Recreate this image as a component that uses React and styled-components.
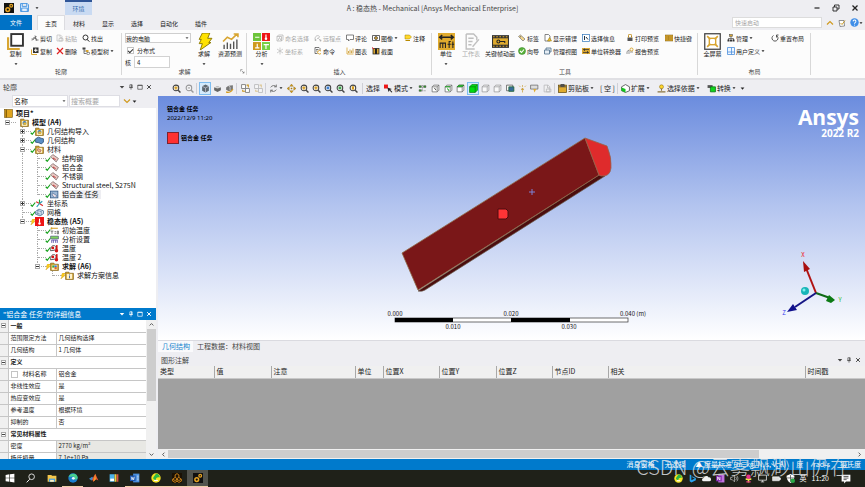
import React, { useState } from "react";
import styled, { createGlobalStyle } from "styled-components";

const GlobalStyle = createGlobalStyle`
    * {
        box-sizing: border-box;
    }

    body {
        margin: 0;
        background: #eeeef2;
        color: #222;
        font-family: "Noto Sans CJK SC", "Noto Sans", sans-serif;
        font-size: 7px;
        line-height: 9px;
    }

    button, input, select {
        font: inherit;
        color: inherit;
        margin: 0;
        padding: 0;
        border: none;
        background: none;
    }

    button, select {
        cursor: pointer;
    }
`;

const Page = styled.div`
    position: relative;
    min-height: 100vh;
    display: flex;
    flex-direction: column;
    overflow: hidden;
    white-space: nowrap;
`;

const Svg = styled.svg`
    width: ${(p) => p.$size}px;
    height: ${(p) => p.$size}px;
    flex: none;
    display: block;
    opacity: ${(p) => (p.$faded ? 0.45 : 1)};
`;

/* ---------- icons ---------- */

const lens = (
    <>
        <circle cx="7" cy="7" r="5" fill="#fff" stroke="#444" strokeWidth="1.8" />
        <path d="M11 11l4 4" stroke="#444" strokeWidth="2.4" />
    </>
);

const cubeLines = (
    <path d="M2 5h9v9H2zM2 5l3-3h9v9l-3 3M11 5l3-3" fill="#fff" stroke="#666" strokeWidth="1.3" />
);

const folderBox = (
    <>
        <path d="M1 2h6l1 2h7v11H1z" fill="#c8951b" stroke="#6f4d00" />
        <rect x="3" y="5" width="10" height="9" fill="#fff3c9" />
    </>
);

const gears = (
    <>
        <rect width="16" height="16" fill="#101010" />
        <circle cx="6" cy="10.5" r="3" fill="none" stroke="#e5a323" strokeWidth="2.4" />
        <circle cx="11.5" cy="4.5" r="2.2" fill="none" stroke="#e5a323" strokeWidth="2" />
    </>
);

const drawings = {
    gears,
    save: (
        <path d="M1 1h12l2 2v12H1zM4 1v5h8V1M3 15V9h10v6" fill="#e3f0ff" stroke="#3d8ee0" strokeWidth="1.6" />
    ),
    bigCopy: (
        <>
            <path d="M1 4v11h11" fill="none" stroke="#d8a531" strokeWidth="2" />
            <rect x="4" y="1" width="11" height="11" fill="#fff" stroke="#333" strokeWidth="1.8" />
        </>
    ),
    cut: <path d="M2 13l9-9M8 3l3 10M1 10h5M9 12h6M5 7l6 3" fill="none" stroke="#555" strokeWidth="1.6" />,
    paste: <path d="M2 2h7l3 3v9H2zM8 2v5h4M6 9h8v5H6z" fill="#f4f4f4" stroke="#777" strokeWidth="1.4" />,
    find: (
        <>
            <circle cx="7" cy="7" r="5" fill="none" stroke="#333" strokeWidth="2" />
            <path d="M10 11l5 4" stroke="#333" strokeWidth="2" />
        </>
    ),
    copy: (
        <>
            <path d="M1 5v10h11" fill="none" stroke="#d8a531" strokeWidth="2" />
            <rect x="4" y="1" width="11" height="11" fill="#333" />
            <path d="M9.500 3v7M6 6.500h7" stroke="#fff" strokeWidth="2" />
        </>
    ),
    remove: <path d="M2 2l12 12M14 2L2 14" stroke="#e01f1f" strokeWidth="2.4" />,
    tree: (
        <>
            <path d="M4 4v9h5M4 8h5" fill="none" stroke="#444" strokeWidth="1.4" />
            <rect x="1" y="1" width="6" height="4" fill="#444" />
            <rect x="8" y="6" width="5" height="4" fill="#d8a531" />
            <rect x="10" y="11" width="5" height="4" fill="#fff" stroke="#444" />
        </>
    ),
    bolt: <path d="M6 0h7l-2 5h4l-3 4h2L4 16l2-6H3l2-4H3z" fill="#ffe200" stroke="#8b7900" strokeWidth="0.9" />,
    forecast: (
        <>
            <path d="M2 15v-4M5 15V9M8 15v-5M11 15V8M14 15V6" stroke="#555" strokeWidth="1.3" />
            <path d="M1 8l4-4 4 2 5-5M11 1h4v3" fill="none" stroke="#d8a531" strokeWidth="1.5" />
        </>
    ),
    analysis: (
        <>
            <rect width="7.500" height="7.500" fill="#6cc43a" />
            <rect x="8.500" width="7.500" height="7.500" fill="#ee1515" />
            <rect y="8.500" width="7.500" height="7.500" fill="#cf9a1e" />
            <rect x="8.500" y="8.500" width="7.500" height="7.500" fill="#76cf42" />
            <path d="M2 4h4M12.200 1.500v4M2 14h4M4 10v4M10 11h5M12.200 11v4" fill="none" stroke="#fff" strokeWidth="1.1" />
            <circle cx="12.200" cy="5.500" r="1.200" fill="#fff" />
        </>
    ),
    named: <path d="M2 5h9v9H2zM2 5l3-3h9v9l-3 3M4 13l3-6 3 6" fill="none" stroke="#555" strokeWidth="1.4" />,
    remote: (
        <>
            <path d="M2 10c0-6 5-8 8-6s-1 5-4 5M9 9l3 3" fill="none" stroke="#555" strokeWidth="1.5" />
            <circle cx="13" cy="13" r="1.800" fill="#555" />
            <circle cx="3" cy="12" r="1.800" fill="#555" />
        </>
    ),
    comment: <path d="M1 2h14v9H8l-3 3v-3H1z" fill="#fff" stroke="#555" strokeWidth="1.5" />,
    camera: (
        <>
            <path d="M1 3h14v10H1z" fill="#fff" stroke="#333" strokeWidth="1.5" />
            <circle cx="8" cy="8" r="3" fill="#d8a531" stroke="#333" strokeWidth="1.4" />
        </>
    ),
    note: (
        <>
            <path d="M2 2h9l4 4-4 4H2z" fill="#ffd72b" stroke="#a08300" />
            <path d="M3 13h9" stroke="#b98a00" strokeWidth="2" />
        </>
    ),
    axes: <path d="M8 1v14M2 4l12 8M14 4L2 12" stroke="#777" strokeWidth="1.5" />,
    command: (
        <>
            <path d="M2 1h8l2 2v4M2 1v12h5M4 5h5M4 8h3" fill="none" stroke="#444" strokeWidth="1.4" />
            <path d="M14 8a4 3.500 0 1 0 0 5" fill="none" stroke="#d8a531" strokeWidth="2" />
        </>
    ),
    chart: (
        <>
            <path d="M2 1v13h13" fill="none" stroke="#d8a531" strokeWidth="1.6" />
            <path d="M5 12V8M8 12V5M11 12V7M14 12V3" stroke="#c89527" strokeWidth="1.6" />
        </>
    ),
    section: (
        <>
            <rect x="2" y="3" width="12" height="11" fill="#d8a531" stroke="#222" strokeWidth="1.5" />
            <rect x="6" y="3" width="4" height="11" fill="#222" />
            <path d="M0 1l4 3" stroke="#e01f1f" strokeWidth="2" />
        </>
    ),
    units: (
        <>
            <rect width="16" height="16" fill="#e0ab2e" />
            <path d="M1.500 4h13M4 2L1.500 4 4 6M12 2l2.500 2L12 6" fill="none" stroke="#222" strokeWidth="1.3" />
            <path d="M2 14V9.500h5V14M4.500 9.500V14M10.500 14V8h1.500M9 10.500h3M14 8v6M12.800 10.500h2.400" fill="none" stroke="#222" />
        </>
    ),
    worksheet: (
        <>
            <path d="M3 1h7l3 3v3M3 1v14h8" fill="none" stroke="#777" strokeWidth="1.3" />
            <path d="M5 5h5M5 8h4M5 11h3M9 13l6-7" stroke="#777" strokeWidth="1.3" />
        </>
    ),
    film: (
        <>
            <rect y="2" width="16" height="12" fill="#333" />
            <rect x="1" y="5" width="14" height="6" fill="#e0ab2e" />
            <path d="M1 3.500h14M1 12.500h14" stroke="#e0ab2e" strokeDasharray="1.500 1.500" />
            <circle cx="6" cy="8" r="1.400" fill="none" stroke="#222" />
            <path d="M7.500 8H12v1.500" fill="none" stroke="#222" />
        </>
    ),
    tag: (
        <>
            <path d="M1 5l4-3 9 8-4 4z" fill="#f2d58b" stroke="#777" strokeWidth="1.4" />
            <circle cx="5" cy="5.500" r="1.200" fill="#555" />
        </>
    ),
    guide: (
        <>
            <circle cx="8" cy="8" r="7" fill="#59b33c" stroke="#2f7f1d" />
            <path d="M4 8l3 3 5-6" fill="none" stroke="#fff" strokeWidth="2.2" />
        </>
    ),
    errors: (
        <>
            <path d="M2 1h7l3 3v10H2z" fill="#fff" stroke="#555" strokeWidth="1.4" />
            <path d="M7 14l4-7 4 7z" fill="#f1c232" stroke="#8a6d00" />
        </>
    ),
    views: (
        <>
            <path d="M1 6h10v8H1zM4 6V2h10v8h-3" fill="#e7eef5" stroke="#4a6b86" strokeWidth="1.6" />
        </>
    ),
    info: (
        <>
            <rect x="1" y="1" width="14" height="14" fill="#fff" stroke="#3c7fc0" strokeWidth="1.5" />
            <path d="M5 4v8M8 6l4 5" stroke="#234" strokeWidth="2" />
        </>
    ),
    convert: (
        <>
            <rect y="2" width="16" height="12" fill="#d8a531" />
            <path d="M2 5h12M2 11h12M5 3v5M11 8v5" stroke="#333" strokeWidth="1.5" />
        </>
    ),
    print: (
        <>
            <path d="M3 7h10v7H3z" fill="#555" />
            <path d="M5 7V3a3 3 0 0 1 6 0v4" fill="none" stroke="#c08d1a" strokeWidth="2" />
        </>
    ),
    report: (
        <>
            <path d="M2 14V9l4-3v8M8 10h6" fill="none" stroke="#777" strokeWidth="1.5" />
            <circle cx="11" cy="5" r="3" fill="none" stroke="#d8a531" strokeWidth="2" />
        </>
    ),
    keys: (
        <>
            <rect y="2" width="16" height="12" fill="#d8a531" stroke="#775a0c" />
            <path d="M3 6h10M3 10h10" stroke="#6b5010" strokeWidth="1.4" strokeDasharray="2 1" />
        </>
    ),
    fullscreen: (
        <>
            <rect x="0.700" y="0.700" width="14.600" height="14.600" fill="#fff" stroke="#444" strokeWidth="1.2" />
            <rect x="5" y="5" width="6" height="6" fill="none" stroke="#d8a531" strokeWidth="1.3" />
            <path d="M3 3l3 3M13 3l-3 3M3 13l3-3M13 13l-3-3" stroke="#d8a531" strokeWidth="1.5" />
        </>
    ),
    manage: (
        <>
            <path d="M8 5v4M3 12V9h10v3" fill="none" stroke="#444" strokeWidth="1.4" />
            <rect x="5" y="1" width="6" height="4" fill="#d8a531" stroke="#444" />
            <path d="M1 11h4v4H1zM6 11h4v4H6zM11 11h4v4h-4z" fill="#333" />
        </>
    ),
    layout: <path d="M1 1h14v14H1zM9 1v14M1 10h14" fill="#eef6ff" stroke="#4c8fdc" strokeWidth="1.6" />,
    reset: <path d="M5 3a6 6 0 1 0 6 0M11 7V2h4" fill="none" stroke="#444" strokeWidth="1.8" />,
    help: (
        <>
            <circle cx="8" cy="8" r="7.500" fill="#3f8ee8" />
            <path d="M5.500 6a2.500 2.500 0 1 1 3.500 2.300c-1 .4-1 1-1 1.700M8 12v1.500" fill="none" stroke="#fff" strokeWidth="1.8" />
        </>
    ),
    edit: (
        <>
            <path d="M2 3h10l1 11-9 1z" fill="#fff" stroke="#666" strokeWidth="1.4" />
            <path d="M5 8l3 3 6-8" fill="none" stroke="#c8951b" strokeWidth="1.8" />
        </>
    ),
    up: <path d="M2 11l6-6 6 6" fill="none" stroke="#d09a1f" strokeWidth="2.4" />,
    down: <path d="M2 5l6 6 6-6" fill="none" stroke="#d09a1f" strokeWidth="2.4" />,
    minimize: <path d="M3 8h10" stroke="#222" strokeWidth="2.4" />,
    restore: <path d="M2 6h8v8H2zM5 6V2h9v8h-4" fill="none" stroke="#222" strokeWidth="1.8" />,
    close: <path d="M3 3l10 10M13 3L3 13" stroke="currentColor" strokeWidth="2.6" />,
    pin: <path d="M5 2h6v7H5zM9.500 2v7M3 9.500h10M8 10v5" fill="none" stroke="currentColor" strokeWidth="1.8" />,
    box: <path d="M2 3h12v11H2zM2 4h12" fill="none" stroke="currentColor" strokeWidth="1.8" />,
    caret: <path d="M2 5h12l-6 7z" fill="currentColor" />,
    launcher: <path d="M2 8V2h6M6 6l7 7M13 8v5H8" fill="none" stroke="#555" strokeWidth="1.6" />,

    /* graphics toolbar */
    zoomIn: (
        <>
            {lens}
            <path d="M7 4v6M4 7h6" stroke="#d39a1b" strokeWidth="2.2" />
        </>
    ),
    zoomOut: (
        <>
            <g opacity="0.5">{lens}</g>
            <path d="M5 7h4" stroke="#888" strokeWidth="1.5" />
        </>
    ),
    zoomBlue: (
        <>
            {lens}
            <rect x="4.500" y="4.500" width="5" height="5" fill="#3f7fd0" />
        </>
    ),
    zoomGreen: (
        <>
            {lens}
            <rect x="4.500" y="4.500" width="5" height="5" fill="#3fa34f" />
        </>
    ),
    zoomGold: (
        <>
            {lens}
            <path d="M5 4h4v6H5z" fill="#d39a1b" />
        </>
    ),
    solidCube: (
        <>
            <path d="M8 1l6 3v8l-6 3-6-3V4z" fill="#5e6870" />
            <path d="M2 4l6 3 6-3M8 7v8" fill="none" stroke="#ccd" strokeWidth="1.2" />
        </>
    ),
    slab: (
        <>
            <path d="M2 6l6-2 6 2v5l-6 3-6-3z" fill="#666" />
            <path d="M2 6l6-2 6 2-6 2z" fill="#d5d5d5" />
        </>
    ),
    turnCube: (
        <>
            <path d="M6 3l8-1v8l-7 3-5-3V6z" fill="#777" />
            <path d="M2 14c4 2 10 0 12-5" fill="none" stroke="#d39a1b" strokeWidth="2" />
            <path d="M6 3l3 2v6" fill="none" stroke="#fff" />
        </>
    ),
    sheets: (
        <>
            <path d="M1 1h7v7H1zM8 8h7v7H8z" fill="#fff" stroke="#777" strokeWidth="1.5" />
            <path d="M10 2h3v4M3 10v3h4" fill="none" stroke="#c8951b" strokeWidth="1.8" />
        </>
    ),
    rotate: (
        <path d="M3 6a6 6 0 0 1 10-1M13 10a6 6 0 0 1-10 1M13 1v4H9M3 15v-4h4" fill="none" stroke="#666" strokeWidth="1.5" />
    ),
    pan: (
        <path d="M8 0l3 4H5zM8 16l3-4H5zM0 8l4-3v6zM16 8l-4-3v6zM7 7h2v2H7z" fill="#d39a1b" stroke="#80600c" strokeWidth="0.6" />
    ),
    pickMode: (
        <>
            <rect x="0" y="1" width="7" height="7" fill="#ee1515" />
            <path d="M6 6l8 3-3 1 4 4-2 1-3-4-2 3z" fill="#222" />
        </>
    ),
    nodes: (
        <>
            <path d="M2 3h4v3H2zM10 3h4v3h-4zM2 10h4v3H2z" fill="#35a52b" stroke="#333" strokeWidth="0.8" />
            <path d="M10 12h4M8 2v12" stroke="#555" strokeDasharray="2 1" />
        </>
    ),
    cubeVertex: (
        <>
            {cubeLines}
            <path d="M6 7l3 4" stroke="#333" strokeWidth="1.5" />
        </>
    ),
    cubeEdge: (
        <>
            {cubeLines}
            <path d="M2 5h9M6 8l3 4" stroke="#17a41c" strokeWidth="1.8" />
        </>
    ),
    cubeFace: (
        <>
            {cubeLines}
            <path d="M2 5l3-3h9l-3 3z" fill="#14cc1c" stroke="#167019" />
        </>
    ),
    cubeBody: (
        <>
            <path d="M1 5h10v10H1zM1 5l4-4h10v10l-4 4" fill="#00dd12" stroke="#08740d" strokeWidth="1.2" />
            <path d="M11 5l4-4" stroke="#08740d" />
        </>
    ),
    cubeGray: <g opacity="0.65">{cubeLines}</g>,
    meshPick: (
        <>
            <path d="M1 2h11v10H1z" fill="#fff" stroke="#555" strokeWidth="1.4" />
            <path d="M5 5h9v8H5z" fill="#356c9c" stroke="#263" strokeWidth="1.4" />
        </>
    ),
    sparks: (
        <path d="M2 3l2 2M14 3l-2 2M8 2v3M8 7l2 3H6zM8 11v4" fill="#d39a1b" stroke="#c79a33" strokeWidth="1.3" />
    ),
    label: (
        <>
            <path d="M1 2h13v7H1z" fill="#ddd" stroke="#666" strokeWidth="1.3" />
            <path d="M6 9h5l-3 6z" fill="#e0ab2e" />
        </>
    ),
    clipboard: (
        <>
            <rect x="1" y="2" width="14" height="13" fill="#e0ab2e" stroke="#5f470b" strokeWidth="1.3" />
            <path d="M2 5h12M5 1h6v3H5z" fill="#555" stroke="#444" strokeWidth="1.5" />
        </>
    ),
    extend: (
        <>
            <path d="M8 1l7 4v7l-7 3-7-3V5z" fill="#fff" stroke="#444" strokeWidth="1.4" />
            <path d="M1 6l7 3v6l-7-3z" fill="#10c41c" />
        </>
    ),
    locate: (
        <>
            <circle cx="8" cy="5" r="3.500" fill="#ffd72b" stroke="#8e6b0c" />
            <path d="M8 8v4M1 14h14" stroke="#8a7440" strokeWidth="2" />
        </>
    ),
    swap: (
        <>
            <path d="M1 2h9v5H1z" fill="#555" />
            <path d="M6 5h9v9H6z" fill="#12d51e" stroke="#0a6e10" strokeWidth="1.3" />
        </>
    ),

    /* outline tree */
    project: (
        <>
            <rect x="1" y="1" width="14" height="14" fill="#e0a51f" stroke="#6b4a00" />
            <path d="M4 1v14" stroke="#7a5500" strokeWidth="2" />
        </>
    ),
    model: (
        <>
            {folderBox}
            <circle cx="8" cy="9" r="3.500" fill="#3b78b8" />
            <path d="M6 8h5v4H6z" fill="#e8b732" />
        </>
    ),
    geometry: <path d="M1 5l5-3 5 2 4 1v6l-4 3-4-2-6-1z" fill="#5b8ec4" stroke="#274f78" strokeWidth="1.4" />,
    materials: (
        <>
            {folderBox}
            <path d="M5 6l6 3-2 4-5-3z" fill="#efb28f" stroke="#8d4d3e" />
        </>
    ),
    material: (
        <>
            <path d="M1 5l4-4 10 7-4 6z" fill="#eac9c4" stroke="#7c6b6b" strokeWidth="1.4" />
            <path d="M5 7l5 3" stroke="#c34848" strokeWidth="2" />
        </>
    ),
    assignment: (
        <>
            <rect x="1" y="2" width="13" height="12" fill="#9eb8d6" stroke="#365d8a" strokeWidth="1.5" />
            <path d="M4 5l8 5-3 4-5-5z" fill="#f2e3ea" stroke="#365d8a" />
        </>
    ),
    coords: (
        <>
            <path d="M8 8V1" stroke="#21a22b" strokeWidth="2" />
            <path d="M8 8l6 4M8 8L2 5" stroke="#e02b2b" strokeWidth="2" />
            <path d="M8 8l-5 6M8 8l5-4" stroke="#2aa0b6" strokeWidth="2" />
        </>
    ),
    mesh: (
        <>
            <path d="M1 6l6-4 8 3v5l-6 4-8-3z" fill="#dce8f5" stroke="#486c90" strokeWidth="1.4" />
            <path d="M4 4l8 3M1 8l8 3M5 4v8M11 6v7" stroke="#486c90" />
        </>
    ),
    thermal: (
        <>
            <rect width="16" height="16" fill="#ee1515" />
            <path d="M8 3v7" stroke="#fff" strokeWidth="2" />
            <circle cx="8" cy="11.500" r="2.200" fill="#fff" />
        </>
    ),
    initial: (
        <>
            <path d="M1 4h13M3 2v4" stroke="#d39a1b" strokeWidth="1.8" />
            <path d="M1 9h5M3.500 9v5M8 10h3M8 13h3M13 9h2v5h-2z" fill="none" stroke="#444" strokeWidth="1.2" />
        </>
    ),
    settings: (
        <>
            <path d="M1 2h14v5H1z" fill="#7dd35d" stroke="#3d3d7a" />
            <path d="M3 14V9h10v5M6 14v-5M10 14V9" fill="none" stroke="#5c4fa8" strokeWidth="1.5" />
        </>
    ),
    temperature: (
        <>
            <path d="M1 12c0-7 3-10 7-9s3 6 0 8z" fill="#fff" stroke="#333" strokeWidth="1.4" />
            <path d="M12 2v9" stroke="#d31616" strokeWidth="3" />
            <circle cx="11.500" cy="12" r="3" fill="#d31616" />
            <circle cx="5" cy="7" r="2.500" fill="#d31616" />
        </>
    ),
    solution: (
        <>
            {folderBox}
            <path d="M4 6h4v4H4z" fill="#3aa83c" />
            <path d="M8 9h4v4H8z" fill="#e06327" />
            <path d="M8 6h4v3H8z" fill="#3b78d8" />
        </>
    ),
    solutionInfo: (
        <>
            {folderBox}
            <path d="M8 6v1M8 8v5" stroke="#3b62a8" strokeWidth="1.6" />
        </>
    ),
    check: <path d="M2 10l4 4L14 4" fill="none" stroke="#16a01c" strokeWidth="3.200" />,
    flash: <path d="M7 0h7l-4 6h4L2 16l4-8H3z" fill="#ffcf1c" stroke="#c59200" />,

    /* taskbar */
    windows: <path d="M1 3l6-1v5.500H1zM8 2l7-1v6.500H8zM1 8.500h6V14l-6-1zM8 8.500h7V15l-7-1z" fill="#fff" />,
    search: (
        <>
            <circle cx="9" cy="6" r="4.500" fill="none" stroke="#eee" strokeWidth="1.400" />
            <path d="M6 10l-5 5" stroke="#eee" strokeWidth="1.600" />
        </>
    ),
    folder: (
        <>
            <path d="M1 3h6l1 1.500h7V14H1z" fill="#f3c64b" />
            <path d="M3 9h10v5H3z" fill="#4aa0df" />
            <path d="M5 11h6v3H5z" fill="#fff1c2" />
        </>
    ),
    edge: (
        <>
            <circle cx="8" cy="8" r="7.500" fill="#1a7fd0" />
            <path d="M1 6c2-6 13-7 14.500 1 0 4-5 4-6 3 2-3-1-5-4-4-3 0-4 0-4.500 0z" fill="#48cf8c" />
            <circle cx="8.500" cy="8.500" r="2.300" fill="#e7f7ff" />
        </>
    ),
    matlab: (
        <>
            <path d="M0 9l5-3 3 3-4 3z" fill="#3c87c8" />
            <path d="M5 10l5-9 5 11-4-2-4 4z" fill="#e8552d" />
            <path d="M10 1l1 9-4 4z" fill="#f3a22b" />
        </>
    ),
    books: (
        <>
            <path d="M1 2h8v12H1z" fill="#4cb3e8" />
            <path d="M9 2h3v12H9z" fill="#f2cf3c" />
            <path d="M12.500 2H15v12h-2.500z" fill="#d95247" />
            <path d="M2 9h6v4H2z" fill="#fff" />
        </>
    ),
    word: (
        <>
            <path d="M5 1h10v14H5z" fill="#4a90e0" />
            <path d="M0 4h9v9H0z" fill="#1b56b0" />
            <path d="M2 6l1.200 5L4.500 7l1.300 4L7 6M11 5h3M11 8h3M11 11h3" fill="none" stroke="#fff" strokeWidth="1.100" />
        </>
    ),
    safe: (
        <>
            <circle cx="8" cy="8" r="7.500" fill="#f7e420" />
            <path d="M8 1c4 0 6 3 6 6-4-1-7 1-6 4-4 0-6-3-3-6z" fill="#2eb745" />
            <path d="M5 11h6v2H5z" fill="#fff" />
        </>
    ),
    workbench: (
        <>
            <rect width="16" height="16" fill="#1a1205" />
            <path d="M8 1l3 2v4l4 3v3l-4 2-3-2-3 2-4-2v-3l4-3V3zM5 7l3 2 3-2M8 9v4M1 10l4 2 3-2M15 10l-4 2-3-2" fill="none" stroke="#d98c1a" strokeWidth="1.400" />
        </>
    ),
    bing: <path d="M3 1l3 1v9l6-3-4-2-1-2 7 3v4l-8 4-3-2z" fill="#28a3ee" />,
    cloud: <path d="M3 13a3 3 0 0 1 0-6 5 5 0 0 1 9-1 3.500 3.500 0 0 1 1 7z" fill="#f2f2f2" />,
    onenote: (
        <>
            <path d="M4 1h11v14H4z" fill="#c274e0" />
            <path d="M0 3h10v10H0z" fill="#7c22a8" />
            <path d="M3 11V5l4 6V5" fill="none" stroke="#fff" strokeWidth="1.500" />
        </>
    ),
    sound: <path d="M1 6h3l4-4v12l-4-4H1zM10 5a4 4 0 0 1 0 6M12 3a7 7 0 0 1 0 10" fill="none" stroke="#bbb" strokeWidth="1.300" />,
    flower: (
        <>
            <path d="M8 8v7M3 9h10" stroke="#f0e14a" strokeWidth="3" />
            <circle cx="8" cy="5" r="4" fill="#e8338a" />
            <path d="M4 14h8" stroke="#e8338a" strokeWidth="2" />
        </>
    ),
    monitor: <path d="M1 2h14v9H1zM5 14h6M8 11v3" fill="none" stroke="#ddd" strokeWidth="1.500" />,
    battery: <path d="M1 5h12v7H1zM13 7h2v3h-2" fill="#ddd" stroke="#fff" />,
    shield: (
        <>
            <path d="M8 0l7 3c0 6-2 10-7 13C3 13 1 9 1 3z" fill="#fff" />
            <path d="M8 2v12M2 7h12" stroke="#333" strokeWidth="1.200" />
            <circle cx="12" cy="12" r="4" fill="#29a745" />
        </>
    ),
    message: (
        <>
            <path d="M1 1h14v11H8l-3 3v-3H1z" fill="#fff" />
            <path d="M4 4h8M4 6.500h8M4 9h5" stroke="#333" strokeWidth="1.200" />
        </>
    ),
};

const Icon = ({ name, size = 8, faded }) => (
    <Svg viewBox="0 0 16 16" $size={size} $faded={faded} aria-hidden="true">
        {drawings[name]}
    </Svg>
);

/* ---------- title bar and tabs ---------- */

const TitleBar = styled.header`
    height: 15px;
    display: grid;
    grid-template-columns: 1fr auto 1fr;
    align-items: center;
`;

const QuickAccess = styled.div`
    height: 15px;
    display: flex;
    align-items: center;
    gap: 6px;
    padding-left: 4px;
`;

const ContextTitle = styled.div`
    width: 27px;
    height: 15px;
    margin-left: 20px;
    padding-top: 2px;
    border-top: 2px solid #2f5597;
    background: #c9daf2;
    color: #3369ad;
    font-size: 6px;
    text-align: center;
`;

const Title = styled.h1`
    margin: 0;
    padding-top: 1px;
    font-size: 7px;
    font-weight: 400;
    color: #444;
`;

const WindowButtons = styled.div`
    display: flex;
    justify-content: flex-end;
    gap: 11px;
    padding-right: 6px;
`;

const TabBar = styled.nav`
    height: 15px;
    display: flex;
    align-items: center;
    font-size: 6px;
`;

const FileTab = styled.button`
    width: 32px;
    height: 15px;
    margin-right: 5px;
    background: #0072c6;
    color: #fff;
`;

const Tab = styled.button`
    height: 15px;
    padding: 0 7px;
    margin-right: ${(p) => (p.$active ? 0 : 1)}px;
    border: 1px solid ${(p) => (p.$active ? "#dcdce0" : "transparent")};
    border-bottom: none;
    background: ${(p) => (p.$active ? "#fcfcfc" : "transparent")};
`;

const TabTools = styled.div`
    flex: 1;
    display: flex;
    align-items: center;
    justify-content: flex-end;
    gap: 4px;
    padding-right: 2px;
`;

const QuickLaunch = styled.input`
    width: 90px;
    height: 11px;
    padding: 0 2px;
    border: 1px solid #dcdcdc;
    background: #fff;

    &::placeholder {
        color: #a5a5a5;
    }
`;

const PlainButton = styled.button`
    display: flex;
    align-items: center;
    color: inherit;
`;

/* ---------- ribbon ---------- */

const Ribbon = styled.div`
    display: flex;
    height: 50px;
    background: #fcfcfc;
    border-bottom: 2px solid #e0e0e4;
`;

const Group = styled.section`
    position: relative;
    width: ${(p) => p.$width}px;
    display: flex;
    flex-direction: column;
    margin: 2px 0;

    &::after {
        content: "";
        position: absolute;
        right: 0;
        top: 1px;
        bottom: 1px;
        border-right: 1px solid #d8d8d8;
    }
`;

const GroupBody = styled.div`
    height: 36px;
    display: flex;
`;

const Caption = styled.div`
    font-size: 6px;
    text-align: center;
    color: #444;
`;

const Launcher = styled.button`
    position: absolute;
    right: 2px;
    bottom: 2px;
`;

const BigButton = styled.button`
    width: ${(p) => p.$width}px;
    display: flex;
    flex-direction: column;
    align-items: center;
    padding-top: 1px;
    font-size: 6px;
    line-height: 8px;
    color: ${(p) => (p.$faded ? "#aaa" : "#222")};
`;

const BigCaret = styled.span`
    margin-top: 4px;
`;

const Commands = styled.div`
    display: grid;
    grid-template-columns: ${(p) => p.$columns};
    grid-template-rows: 12px 12px;
    row-gap: 1px;
`;

const Command = styled.button`
    display: flex;
    align-items: center;
    gap: 1px;
    font-size: 6px;
    color: ${(p) => (p.$faded ? "#aaa" : "#222")};
`;

const SolveForm = styled.div`
    width: 69px;
    padding: 1px 0 0 3px;
    display: flex;
    flex-direction: column;
    gap: 2px;
    font-size: 6px;
`;

const SolveRow = styled.label`
    height: 10px;
    display: flex;
    align-items: center;
    gap: 3px;
`;

const MachineSelect = styled.select`
    height: 10px;
    width: 100%;
    border: 1px solid #cfcfcf;
    background: #fff;
    appearance: none;
    grid-area: 1 / 1;
`;

const SelectBox = styled.div`
    display: grid;
    grid-template-columns: 1fr;
    align-items: center;

    svg {
        grid-area: 1 / 1;
        justify-self: end;
        margin-right: 2px;
        pointer-events: none;
        color: #555;
    }
`;

const Check = styled.input`
    appearance: none;
    width: 7px;
    height: 7px;
    margin-left: ${(p) => p.$indent || 0}px;
    border: 1px solid #c4c4c4;
    background: #fff;
    display: grid;
    place-items: center;

    &:checked::before {
        content: "";
        width: 2px;
        height: 4px;
        border: solid #333;
        border-width: 0 1px 1px 0;
        transform: rotate(45deg);
    }
`;

const CoreInput = styled.input`
    width: 36px;
    height: 12px;
    padding: 0 2px;
    border: 1px solid #d2d2d2;
    background: #fff;
`;

/* ---------- work area ---------- */

const Main = styled.main`
    flex: 1;
    display: flex;
    gap: 2px;
    min-height: 0;
`;

const Side = styled.aside`
    width: 156px;
    display: flex;
    flex-direction: column;
`;

const Work = styled.div`
    flex: 1;
    min-width: 0;
    display: flex;
    flex-direction: column;
`;

const Panel = styled.section`
    flex: ${(p) => p.$grow} 1 0;
    min-height: 0;
    display: flex;
    flex-direction: column;
    overflow: hidden;
`;

const PanelTitle = styled.div`
    flex: none;
    height: ${(p) => p.$height || 12}px;
    display: flex;
    align-items: center;
    gap: 3px;
    padding: 0 4px 0 3px;
    background: ${(p) => (p.$active ? "#007acc" : "#eeeef2")};
    color: ${(p) => (p.$active ? "#fff" : "#444")};
`;

const Dots = styled.span`
    flex: 1;
    height: 4px;
    background-image: radial-gradient(circle, ${(p) => p.$color} 25%, transparent 30%);
    background-size: 4px 2px;
`;

const FilterBar = styled.div`
    height: 14px;
    display: flex;
    align-items: center;
    gap: 1px;
    padding-left: 12px;

    & > :first-child {
        width: 56px;
    }
`;

const FilterSelect = styled(MachineSelect)`
    height: 12px;
    padding-left: 1px;
    border-color: #dedee4;
`;

const FilterInput = styled.input`
    width: 51px;
    height: 12px;
    margin-right: 2px;
    padding: 0 1px;
    border: 1px solid #dedee4;
    background: #fff;

    &::placeholder {
        color: #a5a5a5;
    }
`;

const Tree = styled.ul`
    flex: 1;
    margin: 0;
    padding: 1px 0 0;
    list-style: none;
    background: #fff;
`;

const TreeRow = styled.li`
    height: 9px;
    display: flex;
    align-items: center;
    padding-left: ${(p) => (p.$root ? 4 : 0)}px;
    font-weight: ${(p) => (p.$bold ? 700 : 400)};
    color: #111;
`;

const Guide = styled.span`
    width: 15px;
    height: 9px;
    padding-left: 7px;
    flex: none;

    &::before {
        content: "";
        display: block;
        height: ${(p) => (p.$half ? 5 : 9)}px;
        border-left: ${(p) => (p.$line ? "1px dotted #aaa" : "none")};
    }
`;

const Branch = styled(Guide)`
    position: relative;

    &::after {
        content: "";
        position: absolute;
        left: 8px;
        top: 4px;
        width: 8px;
        border-top: 1px dotted #aaa;
    }
`;

const Expander = styled.button`
    position: absolute;
    z-index: 1;
    left: 5px;
    top: 2px;
    width: 5px;
    height: 5px;
    border: 1px solid #aaa;
    background: linear-gradient(#333, #333) center / 3px 1px no-repeat #fff;

    &::before {
        content: "";
        display: ${(p) => (p.$open ? "none" : "block")};
        width: 1px;
        height: 3px;
        margin: 0 auto;
        background: #333;
    }
`;

const Status = styled.span`
    width: 5px;
    height: 7px;
    display: flex;
    align-items: flex-end;
    justify-content: center;
    flex: none;
`;

const TreeLabel = styled.span`
    margin-left: 3px;
    padding-right: 2px;
    background: ${(p) => (p.$selected ? "#eeeef2" : "none")};
`;

/* ---------- details ---------- */

const DetailsBody = styled.div`
    flex: 1;
    min-height: 0;
    display: flex;
    overflow: hidden;
    background: #f0f0f0;
`;

const DetailsTable = styled.table`
    flex: 1;
    height: max-content;
    border-collapse: collapse;
    table-layout: fixed;
    font-size: 6px;
    background: #fff;

    tr {
        height: 12px;
    }

    th, td {
        padding: 0 0 0 2px;
        border-bottom: 1px solid #c6c6c6;
        text-align: left;
        font-weight: 400;
        line-height: 8px;
    }
`;

const Gutter = styled.td`
    width: 8px;
    background: #f0f0f0;
    border-right: 1px solid #c6c6c6;
`;

const Toggle = styled.button`
    display: block;
    width: 5px;
    height: 5px;
    margin-left: -1px;
    border: 1px solid #aaa;
    background: linear-gradient(#444, #444) center / 3px 1px no-repeat #fff;
`;

const Category = styled.th`
    && {
        font-weight: 700;
    }
`;

const Value = styled.td`
    border-left: 1px solid #c6c6c6;
    background: ${(p) => (p.$readOnly ? "#e8e8e4" : "#fff")};
`;

const NameLabel = styled.label`
    display: flex;
    align-items: center;
    gap: 5px;
`;

const VScroll = styled.div`
    width: 10px;
    display: flex;
    flex-direction: column;
    align-items: center;
    padding: 2px 0;
    color: #555;
`;

const VThumb = styled.div`
    width: 9px;
    height: 72px;
    margin: 2px 0 auto;
    background: #cdcdcd;
`;

/* ---------- graphics ---------- */

const Toolbar = styled.div`
    height: 16px;
    display: flex;
    align-items: center;
    padding-left: 12px;
`;

const Tool = styled.button`
    height: 13px;
    min-width: 12px;
    display: flex;
    align-items: center;
    justify-content: center;
    gap: 1px;
    margin-right: ${(p) => p.$after || 0}px;
    border: 1px solid ${(p) => (p.$active ? "#7fbdf0" : "transparent")};
    background: ${(p) => (p.$active ? "#d5eafc" : "transparent")};
`;

const Divider = styled.span`
    height: 11px;
    margin: 0 2px 0 1px;
    border-left: 1px solid #cfcfd6;
`;

const Viewport = styled.div`
    flex: 1;
    position: relative;
    min-height: 0;
    background: linear-gradient(#6b8cde, #b3c4ef 45%, #fff);
`;

const Scene = styled.svg`
    position: absolute;
    inset: 0;
    width: 100%;
    height: 100%;
`;

const Legend = styled.div`
    position: absolute;
    left: 9px;
    top: 9px;
    color: #000;
    font-family: "Noto Sans", "Noto Sans CJK SC", sans-serif;
    font-size: 6px;
`;

const LegendName = styled.div`
    font-weight: 700;
`;

const LegendKey = styled.div`
    display: flex;
    align-items: center;
    gap: 2px;
    margin-top: 9px;
    font-weight: 700;

    &::before {
        content: "";
        width: 10px;
        height: 10px;
        border: 1px solid #7c2330;
        background: #ff3030;
    }
`;

const Brand = styled.div`
    position: absolute;
    right: 6px;
    top: 10px;
    color: #fff;
    font: 700 21px/22px "Open Sans", sans-serif;
    text-align: right;
`;

const Version = styled.div`
    font-size: 10px;
    line-height: 11px;
`;

const ViewTabs = styled.div`
    height: 14px;
    display: flex;
    align-items: flex-start;
    border-top: 1px solid #dadae0;
`;

const ViewTab = styled.button`
    height: 11px;
    padding: 0 3px 0 4px;
    background: ${(p) => (p.$active ? "#fafafc" : "transparent")};
    color: ${(p) => (p.$active ? "#1584cd" : "#444")};
`;

const Notes = styled.section`
    height: 105px;
    display: flex;
    flex-direction: column;
`;

const NotesBody = styled.div`
    flex: 1;
    background: #a0a0a0;
`;

const NotesTable = styled.table`
    width: 100%;
    table-layout: fixed;
    border-collapse: collapse;
    background: #f0f0f0;

    th {
        height: 12px;
        padding: 0 2px;
        border-right: 1px solid #a8a8a8;
        border-bottom: 1px solid #c8c8c8;
        font-weight: 400;
        text-align: left;
        color: #222;
    }

    th:last-child {
        border-right: none;
    }
`;

const NoteHead = styled.th`
    width: ${(p) => (p.$width ? `${p.$width}px` : "auto")};
`;

const HScroll = styled.div`
    height: 10px;
    display: flex;
    align-items: center;
    justify-content: space-between;
    padding: 0 3px;
    gap: 2px;
    background: #f0f0f0;
    color: #555;
`;

const HTrack = styled.div`
    flex: 1;
`;

const HThumb = styled.div`
    width: 86%;
    height: 8px;
    background: #cdcdcd;
`;

/* ---------- bottom bars ---------- */

const StatusBar = styled.footer`
    height: 11px;
    display: flex;
    align-items: center;
    justify-content: flex-end;
    gap: 10px;
    padding-right: 4px;
    background: #007acc;
    color: #fff;
`;

const Taskbar = styled.div`
    height: 17px;
    display: flex;
    align-items: center;
    background: #1f2119;
    color: #fff;
`;

const Tasks = styled.div`
    width: 208px;
    display: flex;
`;

const TaskButton = styled.button`
    flex: 1;
    height: 17px;
    display: flex;
    align-items: center;
    justify-content: center;
    background: ${(p) => (p.$active ? "#52544e" : "transparent")};
    border-bottom: 1px solid ${(p) => (p.$running ? "#f0cfa8" : "transparent")};
`;

const Tray = styled.div`
    margin-left: auto;
    display: flex;
    align-items: center;
    gap: 5px;
    padding-right: 14px;
`;

const Clock = styled.time`
    margin-right: 7px;
`;

const Watermark = styled.div`
    position: absolute;
    right: 15px;
    bottom: 8px;
    color: rgba(225, 228, 232, 0.85);
    font: 300 20px/24px "Noto Sans CJK SC", sans-serif;
    pointer-events: none;
`;

/* ---------- data ---------- */

const tabs = ["主页", "材料", "显示", "选择", "自动化", "插件"];

const outlineCommands = [
    { icon: "cut", label: "剪切" },
    { icon: "paste", label: "粘贴", faded: true },
    { icon: "find", label: "找出" },
    { icon: "copy", label: "复制" },
    { icon: "remove", label: "删除" },
    { icon: "tree", label: "模型树", caret: true },
];

const insertCommands = [
    { icon: "named", label: "命名选择", faded: true },
    { icon: "remote", label: "远程点", faded: true },
    { icon: "comment", label: "评论" },
    { icon: "camera", label: "图像", caret: true },
    { icon: "note", label: "注释" },
    { icon: "axes", label: "坐标系", faded: true },
    { icon: "command", label: "命令" },
    { icon: "chart", label: "图表" },
    { icon: "section", label: "截面" },
];

const toolCommands = [
    { icon: "tag", label: "标签" },
    { icon: "errors", label: "显示错误" },
    { icon: "info", label: "选择信息" },
    { icon: "print", label: "打印预览" },
    { icon: "keys", label: "快捷键" },
    { icon: "guide", label: "向导" },
    { icon: "views", label: "管理视图" },
    { icon: "convert", label: "单位转换器" },
    { icon: "report", label: "报告预览" },
];

const layoutCommands = [
    { icon: "manage", label: "管理", caret: true },
    { icon: "reset", label: "重置布局" },
    { icon: "layout", label: "用户定义", caret: true },
];

// guides: one flag per ancestor column, last: no sibling below
const treeRows = [
    { icon: "model", label: "模型 (A4)", guides: [], toggle: "open", bold: true, last: true },
    { icon: "model", label: "几何结构导入", guides: [0], toggle: "closed", status: "check" },
    { icon: "geometry", label: "几何结构", guides: [0], toggle: "closed", status: "check" },
    { icon: "materials", label: "材料", guides: [0], toggle: "open", status: "check" },
    { icon: "material", label: "结构钢", guides: [0, 1], status: "check" },
    { icon: "material", label: "铝合金", guides: [0, 1], status: "check" },
    { icon: "material", label: "不锈钢", guides: [0, 1], status: "check" },
    { icon: "material", label: "Structural steel, S275N", guides: [0, 1], status: "check" },
    { icon: "assignment", label: "铝合金 任务", guides: [0, 1], status: "check", last: true, selected: true },
    { icon: "coords", label: "坐标系", guides: [0], toggle: "closed", status: "check" },
    { icon: "mesh", label: "网格", guides: [0], status: "check" },
    { icon: "thermal", label: "稳态热 (A5)", guides: [0], toggle: "open", status: "flash", bold: true, last: true },
    { icon: "initial", label: "初始温度", guides: [0, 0], status: "check" },
    { icon: "settings", label: "分析设置", guides: [0, 0], status: "check" },
    { icon: "temperature", label: "温度", guides: [0, 0], status: "check" },
    { icon: "temperature", label: "温度 2", guides: [0, 0], status: "check" },
    { icon: "solution", label: "求解 (A6)", guides: [0, 0], toggle: "open", status: "flash", bold: true, last: true },
    { icon: "solutionInfo", label: "求解方案信息", guides: [0, 0, 0], status: "flash", last: true },
];

const details = [
    { category: "一般" },
    { label: "范围限定方法", value: "几何结构选择" },
    { label: "几何结构", value: "1 几何体" },
    { category: "定义" },
    { label: "材料名称", value: "铝合金", checkbox: true },
    { label: "非线性效应", value: "是" },
    { label: "热应变效应", value: "是" },
    { label: "参考温度", value: "根据环境" },
    { label: "抑制的", value: "否" },
    { category: "常见材料属性" },
    { label: "密度", value: "2770 kg/m³", readOnly: true },
    { label: "杨氏模量", value: "7.1e+10 Pa", readOnly: true },
];

const tools = [
    { icon: "zoomIn", after: 1 },
    { icon: "zoomOut" },
    { divider: true },
    { icon: "solidCube", active: true },
    { icon: "slab" },
    { icon: "turnCube" },
    { divider: true },
    { icon: "sheets", after: 1 },
    { icon: "sheets", faded: true },
    { divider: true },
    { icon: "rotate", caret: true, after: 1 },
    { icon: "pan", after: 1 },
    { icon: "zoomIn" },
    { icon: "zoomIn" },
    { icon: "zoomBlue" },
    { icon: "zoomGreen", after: 1 },
    { icon: "zoomGold", after: 2 },
    { divider: true },
    { label: "选择", after: 2 },
    { icon: "pickMode", label: "模式", caret: true, after: 2 },
    { icon: "nodes", after: 1 },
    { icon: "cubeVertex", after: 1 },
    { icon: "cubeEdge" },
    { icon: "cubeFace", after: 1 },
    { icon: "cubeBody", active: true },
    { icon: "cubeGray" },
    { icon: "cubeGray", after: 1 },
    { icon: "meshPick" },
    { icon: "sparks" },
    { icon: "label", after: 1 },
    { icon: "paste", faded: true },
    { divider: true },
    { icon: "clipboard", label: "剪贴板", caret: true, after: 4 },
    { label: "[ 空 ]" },
    { divider: true },
    { icon: "extend", label: "扩展", caret: true, after: 5 },
    { icon: "locate", label: "选择依据", caret: true, after: 5 },
    { icon: "swap", label: "转换", caret: true },
];

const noteColumns = [
    ["类型", 56],
    ["值", 57],
    ["注意", 84],
    ["单位", 28],
    ["位置X", 56],
    ["位置Y", 57],
    ["位置Z", 56],
    ["节点ID", 56],
    ["相关"],
    ["时间戳", 60],
];

const tasks = [
    { icon: "windows" },
    { icon: "search" },
    { icon: "folder" },
    { icon: "edge", running: true },
    { icon: "matlab" },
    { icon: "books" },
    { icon: "word", running: true },
    { icon: "safe", running: true },
    { icon: "workbench", running: true },
    { icon: "gears", running: true, active: true },
];

const trayIcons = ["safe", "bing", "cloud", "onenote", "sound", "flower", "monitor", "battery", "shield"];

/* ---------- parts ---------- */

const CommandGrid = ({ items, columns }) => (
    <Commands $columns={columns}>
        {items.map((c) => (
            <Command key={c.label} $faded={c.faded}>
                <Icon name={c.icon} faded={c.faded} />
                {c.label}
                {c.caret && <Icon name="caret" size={4} />}
            </Command>
        ))}
    </Commands>
);

const Big = ({ icon, label, width, caret, faded }) => (
    <BigButton $width={width} $faded={faded}>
        <Icon name={icon} size={17} faded={faded} />
        {label}
        {caret && (
            <BigCaret>
                <Icon name="caret" size={4} />
            </BigCaret>
        )}
    </BigButton>
);

const PanelButtons = ({ names }) =>
    names.map((n) => (
        <PlainButton key={n} aria-label={n}>
            <Icon name={n} size={6} />
        </PlainButton>
    ));

const TreeItem = ({ row }) => (
    <TreeRow $bold={row.bold}>
        {row.guides.map((g, i) => (
            <Guide key={i} $line={g} />
        ))}
        <Branch $line={row.guides.length > 0} $half={row.last}>
            {row.toggle && <Expander $open={row.toggle === "open"} aria-label={row.label} />}
        </Branch>
        <Status>{row.status && <Icon name={row.status} size={6} />}</Status>
        <Icon name={row.icon} size={9} />
        <TreeLabel $selected={row.selected}>{row.label}</TreeLabel>
    </TreeRow>
);

const DetailRow = ({ row }) => {
    if (row.category) {
        return (
            <tr>
                <Gutter>
                    <Toggle aria-label={row.category} />
                </Gutter>
                <Category colSpan="2">{row.category}</Category>
            </tr>
        );
    }
    return (
        <tr>
            <Gutter />
            <th>
                {row.checkbox ? (
                    <NameLabel>
                        <Check type="checkbox" />
                        {row.label}
                    </NameLabel>
                ) : (
                    row.label
                )}
            </th>
            <Value $readOnly={row.readOnly}>{row.value}</Value>
        </tr>
    );
};

const Model = () => (
    <Scene viewBox="0 0 707 244" fontSize="6">
        <path d="M441 79L447 80L267 194Q264 196 260 195Z" fill="#4c0d0e" stroke="#6b5b4a" strokeWidth="0.7" />
        <path d="M427 42L441 79L260 194L244 157Z" fill="#7a1718" stroke="#8f6a45" strokeWidth="0.8" />
        <path d="M427 42L449 50Q454 62 453 72Q452 81 443 80L441 79Z" fill="#df2b2c" stroke="#96634a" strokeWidth="0.8" />
        <path d="M340 113h8l2 2v6l-2 2h-8z" fill="#ff3436" stroke="#4e0c0e" strokeWidth="1" />
        <path d="M374 93v6M371 96h6" stroke="#7d83d6" />

        <rect x="237" y="222" width="233" height="4" fill="#fff" stroke="#333" strokeWidth="0.7" />
        <path d="M237 222h58v4h-58zM353 222h59v4h-59z" fill="#000" />
        <g fill="#111" textAnchor="middle">
            <text x="237" y="220">0.000</text>
            <text x="353" y="220">0.020</text>
            <text x="475" y="220">0.040 (m)</text>
            <text x="295" y="233">0.010</text>
            <text x="411" y="233">0.030</text>
        </g>

        <circle cx="647" cy="195" r="4" fill="#18b5b8" />
        <circle cx="646" cy="194" r="1.500" fill="#7ff0ee" />
        <path d="M658 197L648 172" stroke="#b01212" strokeWidth="2" />
        <path d="M645 165L652 173L646 176Z" fill="#a80f0f" />
        <path d="M658 197L672 202" stroke="#106b16" strokeWidth="2" />
        <path d="M677 204L671 199L668 205L673 207Z" fill="#0c7a14" />
        <path d="M658 197L637 211" stroke="#151585" strokeWidth="2" />
        <path d="M629 216L635 208L639 214Z" fill="#10108c" />
        <g textAnchor="middle">
            <text x="645" y="161" fill="#e22">X</text>
            <text x="682" y="206" fill="#2b2">Y</text>
            <text x="626" y="219" fill="#33e">Z</text>
        </g>
    </Scene>
);

const App = () => {
    const [tab, setTab] = useState("主页");
    const [distributed, setDistributed] = useState(true);
    const [cores, setCores] = useState("4");

    return (
        <Page>
            <GlobalStyle />
            <TitleBar>
                <QuickAccess>
                    <Icon name="gears" size={10} />
                    <PlainButton aria-label="保存">
                        <Icon name="save" size={9} />
                    </PlainButton>
                    <Icon name="caret" size={4} />
                    <ContextTitle>环境</ContextTitle>
                </QuickAccess>
                <Title>A : 稳态热 - Mechanical [Ansys Mechanical Enterprise]</Title>
                <WindowButtons>
                    <PlainButton aria-label="最小化"><Icon name="minimize" /></PlainButton>
                    <PlainButton aria-label="还原"><Icon name="restore" /></PlainButton>
                    <PlainButton aria-label="关闭"><Icon name="close" /></PlainButton>
                </WindowButtons>
            </TitleBar>

            <TabBar>
                <FileTab>文件</FileTab>
                {tabs.map((t) => (
                    <Tab key={t} $active={t === tab} onClick={() => setTab(t)}>
                        {t}
                    </Tab>
                ))}
                <TabTools>
                    <QuickLaunch placeholder="快速启动" aria-label="快速启动" />
                    <PlainButton aria-label="折叠"><Icon name="up" /></PlainButton>
                    <PlainButton aria-label="选项"><Icon name="edit" /></PlainButton>
                    <PlainButton aria-label="帮助">
                        <Icon name="help" size={9} />
                        <Icon name="caret" size={4} />
                    </PlainButton>
                </TabTools>
            </TabBar>

            <Ribbon>
                <Group $width={122}>
                    <GroupBody>
                        <Big icon="bigCopy" label="复制" width={31} caret />
                        <CommandGrid items={outlineCommands} columns="25px 26px 38px" />
                    </GroupBody>
                    <Caption>轮廓</Caption>
                </Group>
                <Group $width={125}>
                    <GroupBody>
                        <SolveForm>
                            <SelectBox>
                                <MachineSelect aria-label="求解位置">
                                    <option>我的电脑</option>
                                </MachineSelect>
                                <Icon name="caret" size={4} />
                            </SelectBox>
                            <SolveRow>
                                <Check
                                    type="checkbox"
                                    $indent={2}
                                    checked={distributed}
                                    onChange={(e) => setDistributed(e.target.checked)}
                                />
                                分布式
                            </SolveRow>
                            <SolveRow>
                                核
                                <CoreInput value={cores} onChange={(e) => setCores(e.target.value)} />
                            </SolveRow>
                        </SolveForm>
                        <Big icon="bolt" label="求解" width={26} caret />
                        <Big icon="forecast" label="资源预测" width={26} />
                    </GroupBody>
                    <Caption>求解</Caption>
                    <Launcher aria-label="求解设置">
                        <Icon name="launcher" size={5} />
                    </Launcher>
                </Group>
                <Group $width={185}>
                    <GroupBody>
                        <Big icon="analysis" label="分析" width={29} caret />
                        <CommandGrid items={insertCommands} columns="38px 32px 26px 32px 27px" />
                    </GroupBody>
                    <Caption>插入</Caption>
                </Group>
                <Group $width={266}>
                    <GroupBody>
                        <Big icon="units" label="单位" width={28} caret />
                        <Big icon="worksheet" label="工作表" width={22} faded />
                        <Big icon="film" label="关键帧动画" width={36} />
                        <CommandGrid items={toolCommands} columns="26px 38px 44px 39px 30px" />
                    </GroupBody>
                    <Caption>工具</Caption>
                </Group>
                <Group $width={113}>
                    <GroupBody>
                        <Big icon="fullscreen" label="全屏幕" width={29} />
                        <CommandGrid items={layoutCommands} columns="44px 40px" />
                    </GroupBody>
                    <Caption>布局</Caption>
                </Group>
            </Ribbon>

            <Main>
                <Side>
                    <Panel $grow={228}>
                        <PanelTitle $height={14}>
                            轮廓
                            <Dots $color="#bbb" />
                            <PanelButtons names={["caret", "pin", "box", "close"]} />
                        </PanelTitle>
                        <FilterBar>
                            <SelectBox>
                                <FilterSelect aria-label="筛选">
                                    <option>名称</option>
                                </FilterSelect>
                                <Icon name="caret" size={4} />
                            </SelectBox>
                            <FilterInput placeholder="搜索概要" aria-label="搜索概要" />
                            <PlainButton aria-label="展开"><Icon name="down" /></PlainButton>
                            <Icon name="caret" size={5} />
                        </FilterBar>
                        <Tree>
                            <TreeRow $root $bold>
                                <Icon name="project" size={9} />
                                <TreeLabel>项目*</TreeLabel>
                            </TreeRow>
                            {treeRows.map((row) => (
                                <TreeItem key={row.label} row={row} />
                            ))}
                        </Tree>
                    </Panel>
                    <Panel $grow={151}>
                        <PanelTitle $active>
                            "铝合金 任务"的详细信息
                            <Dots $color="#4aa5e0" />
                            <PanelButtons names={["caret", "pin", "box", "close"]} />
                        </PanelTitle>
                        <DetailsBody>
                            <DetailsTable>
                                <colgroup>
                                    <col width="8" />
                                    <col width="48" />
                                    <col />
                                </colgroup>
                                <tbody>
                                    {details.map((row) => (
                                        <DetailRow key={row.category || row.label} row={row} />
                                    ))}
                                </tbody>
                            </DetailsTable>
                            <VScroll>
                                <Svg viewBox="0 0 16 16" $size={5}>
                                    <path d="M2 11l6-6 6 6" fill="none" stroke="currentColor" strokeWidth="3" />
                                </Svg>
                                <VThumb />
                                <Svg viewBox="0 0 16 16" $size={5}>
                                    <path d="M2 5l6 6 6-6" fill="none" stroke="currentColor" strokeWidth="3" />
                                </Svg>
                            </VScroll>
                        </DetailsBody>
                    </Panel>
                </Side>

                <Work>
                    <Toolbar>
                        {tools.map((t, i) =>
                            t.divider ? (
                                <Divider key={i} />
                            ) : (
                                <Tool key={i} $active={t.active} $after={t.after} aria-label={t.label || t.icon}>
                                    {t.icon && <Icon name={t.icon} size={9} faded={t.faded} />}
                                    {t.label}
                                    {t.caret && <Icon name="caret" size={4} />}
                                </Tool>
                            )
                        )}
                        <Tool aria-label="更多">
                            <Icon name="caret" size={5} />
                        </Tool>
                    </Toolbar>
                    <Viewport>
                        <Model />
                        <Legend>
                            <LegendName>铝合金 任务</LegendName>
                            <div>2022/12/9 11:20</div>
                            <LegendKey>铝合金 任务</LegendKey>
                        </Legend>
                        <Brand>
                            Ansys
                            <Version>2022 R2</Version>
                        </Brand>
                    </Viewport>
                    <ViewTabs>
                        <ViewTab $active>几何结构</ViewTab>
                        <ViewTab>工程数据：材料视图</ViewTab>
                    </ViewTabs>
                    <Notes>
                        <PanelTitle>
                            图形注解
                            <Dots $color="#bbb" />
                            <PanelButtons names={["caret", "pin", "close"]} />
                        </PanelTitle>
                        <NotesBody>
                            <NotesTable>
                                <thead>
                                    <tr>
                                        {noteColumns.map(([label, width]) => (
                                            <NoteHead key={label} $width={width}>
                                                {label}
                                            </NoteHead>
                                        ))}
                                    </tr>
                                </thead>
                            </NotesTable>
                        </NotesBody>
                        <HScroll>
                            <Svg viewBox="0 0 16 16" $size={5}>
                                <path d="M11 2L5 8l6 6" fill="none" stroke="currentColor" strokeWidth="3" />
                            </Svg>
                            <HTrack>
                                <HThumb />
                            </HTrack>
                            <Svg viewBox="0 0 16 16" $size={5}>
                                <path d="M5 2l6 6-6 6" fill="none" stroke="currentColor" strokeWidth="3" />
                            </Svg>
                        </HScroll>
                    </Notes>
                </Work>
            </Main>

            <StatusBar>
                <span>消息窗格</span>
                <span>无选择</span>
                <span>▲ 度量标准 (m, kg, N, s, V, A)</span>
                <span>度</span>
                <span>rad/s</span>
                <span>摄氏度</span>
            </StatusBar>
            <Taskbar>
                <Tasks>
                    {tasks.map((t) => (
                        <TaskButton key={t.icon} $running={t.running} $active={t.active} aria-label={t.icon}>
                            <Icon name={t.icon} size={10} />
                        </TaskButton>
                    ))}
                </Tasks>
                <Tray>
                    {trayIcons.map((n) => (
                        <Icon key={n} name={n} size={9} />
                    ))}
                    <span>英</span>
                    <Clock>11:20</Clock>
                    <Icon name="message" size={10} />
                </Tray>
            </Taskbar>
            <Watermark>CSDN @云雾飘渺山仍在</Watermark>
        </Page>
    );
};

export default App;
